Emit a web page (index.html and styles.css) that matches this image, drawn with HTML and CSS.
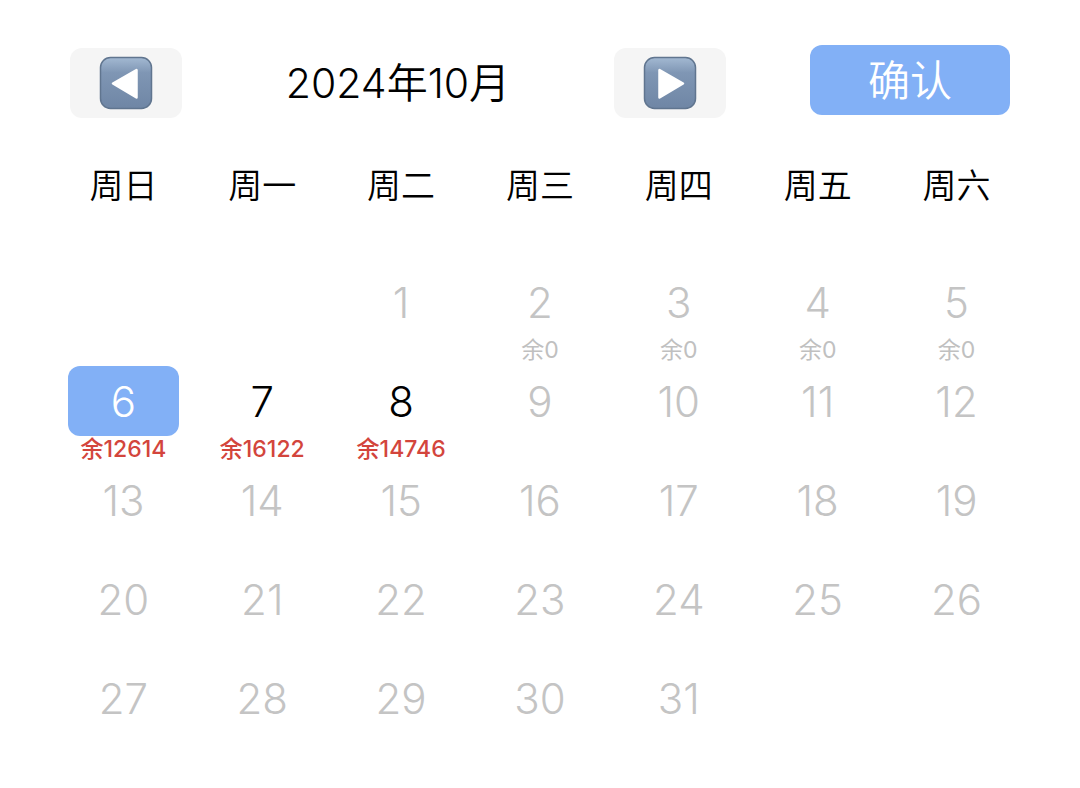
FILE: index.html
```html
<!DOCTYPE html>
<html lang="zh-CN">
<head>
<meta charset="utf-8">
<meta name="viewport" content="width=device-width, initial-scale=1">
<title>2024年10月</title>
<link rel="stylesheet" href="styles.css">
</head>
<body>
<main class="calendar">
  <header class="toolbar">
    <div class="month-nav">
      <button class="nav-button" type="button" aria-label="上个月">
        <svg class="nav-icon" viewBox="0 0 54 54" aria-hidden="true">
          <defs>
            <linearGradient id="key" x1="0" y1="0" x2="0" y2="1">
              <stop offset="0" stop-color="#a3b9d2"/>
              <stop offset="0.3" stop-color="#7f96b4"/>
              <stop offset="1" stop-color="#6f86a5"/>
            </linearGradient>
          </defs>
          <rect x="1.5" y="1.5" width="51" height="51" rx="10" fill="url(#key)" stroke="#60758f" stroke-width="1.5"/>
          <path d="M14 27.500 37.500 14V41.500Z" fill="#fff" stroke="#fff" stroke-width="2.5" stroke-linejoin="round"/>
        </svg>
      </button>
      <h1 class="month-title">2024年10月</h1>
      <button class="nav-button" type="button" aria-label="下个月">
        <svg class="nav-icon" viewBox="0 0 54 54" aria-hidden="true">
          <rect x="1.5" y="1.5" width="51" height="51" rx="10" fill="url(#key)" stroke="#60758f" stroke-width="1.5"/>
          <path d="M40 27.500 16.500 14V41.500Z" fill="#fff" stroke="#fff" stroke-width="2.5" stroke-linejoin="round"/>
        </svg>
      </button>
    </div>
    <button class="confirm" type="button">确认</button>
  </header>
  <table class="days">
    <thead>
      <tr><th>周日</th><th>周一</th><th>周二</th><th>周三</th><th>周四</th><th>周五</th><th>周六</th></tr>
    </thead>
    <tbody>
      <tr>
        <td></td>
        <td></td>
        <td><button class="day" type="button" disabled>1</button></td>
        <td><button class="day" type="button" disabled>2</button><span class="left">余0</span></td>
        <td><button class="day" type="button" disabled>3</button><span class="left">余0</span></td>
        <td><button class="day" type="button" disabled>4</button><span class="left">余0</span></td>
        <td><button class="day" type="button" disabled>5</button><span class="left">余0</span></td>
      </tr>
      <tr>
        <td><button class="day selected" type="button" aria-pressed="true">6</button><span class="left open">余12614</span></td>
        <td><button class="day" type="button">7</button><span class="left open">余16122</span></td>
        <td><button class="day" type="button">8</button><span class="left open">余14746</span></td>
        <td><button class="day" type="button" disabled>9</button></td>
        <td><button class="day" type="button" disabled>10</button></td>
        <td><button class="day" type="button" disabled>11</button></td>
        <td><button class="day" type="button" disabled>12</button></td>
      </tr>
      <tr>
        <td><button class="day" type="button" disabled>13</button></td>
        <td><button class="day" type="button" disabled>14</button></td>
        <td><button class="day" type="button" disabled>15</button></td>
        <td><button class="day" type="button" disabled>16</button></td>
        <td><button class="day" type="button" disabled>17</button></td>
        <td><button class="day" type="button" disabled>18</button></td>
        <td><button class="day" type="button" disabled>19</button></td>
      </tr>
      <tr>
        <td><button class="day" type="button" disabled>20</button></td>
        <td><button class="day" type="button" disabled>21</button></td>
        <td><button class="day" type="button" disabled>22</button></td>
        <td><button class="day" type="button" disabled>23</button></td>
        <td><button class="day" type="button" disabled>24</button></td>
        <td><button class="day" type="button" disabled>25</button></td>
        <td><button class="day" type="button" disabled>26</button></td>
      </tr>
      <tr>
        <td><button class="day" type="button" disabled>27</button></td>
        <td><button class="day" type="button" disabled>28</button></td>
        <td><button class="day" type="button" disabled>29</button></td>
        <td><button class="day" type="button" disabled>30</button></td>
        <td><button class="day" type="button" disabled>31</button></td>
        <td></td>
        <td></td>
      </tr>
    </tbody>
  </table>
</main>
</body>
</html>
```
FILE: styles.css
```css
* {
  box-sizing: border-box;
}

body {
  margin: 0;
  background: #fff;
  color: #000;
  font-family: Inter, "Noto Sans CJK SC", sans-serif;
}

button {
  border: 0;
  padding: 0;
  font: inherit;
  color: inherit;
}

.calendar {
  padding: 45px 54px 24px;
}

.toolbar {
  display: flex;
  align-items: flex-start;
  gap: 84px;
  padding: 0 16px;
}

.month-nav {
  flex: 1;
  display: flex;
  align-items: center;
  padding-top: 3px;
}

.nav-button {
  display: flex;
  align-items: center;
  justify-content: center;
  width: 112px;
  height: 70px;
  border-radius: 12px;
  background: #f5f5f5;
}

.nav-icon {
  width: 54px;
  height: 54px;
}

.month-title {
  flex: 1;
  margin: 0;
  font-size: 41px;
  font-weight: 350;
  line-height: 70px;
  text-align: center;
}

.confirm {
  width: 200px;
  height: 70px;
  padding-top: 2px;
  border-radius: 12px;
  background: #82b0f6;
  color: #fff;
  font-size: 42px;
  font-weight: 350;
  line-height: 68px;
}

.days {
  width: 100%;
  table-layout: fixed;
  border-collapse: collapse;
}

.days th {
  height: 149px;
  padding: 43px 0 0;
  font-size: 34px;
  font-weight: 350;
  line-height: 50px;
  text-align: center;
  vertical-align: top;
}

.days td {
  height: 99px;
  padding: 0;
  text-align: center;
  vertical-align: top;
}

.day {
  display: block;
  width: 80%;
  height: 70px;
  margin: 0 auto;
  padding-top: 2px;
  border-radius: 12px;
  background: none;
  font-size: 42px;
  font-weight: 350;
  line-height: 68px;
}

.day:disabled {
  color: #c4c4c4;
  font-weight: 300;
}

.day.selected {
  background: #82b0f6;
  color: #fff;
  font-weight: 300;
}

.left {
  display: block;
  color: #c0c0c0;
  font-size: 23px;
  font-weight: 400;
  line-height: 26px;
}

.left.open {
  color: #d3453c;
  font-weight: 500;
}
```
